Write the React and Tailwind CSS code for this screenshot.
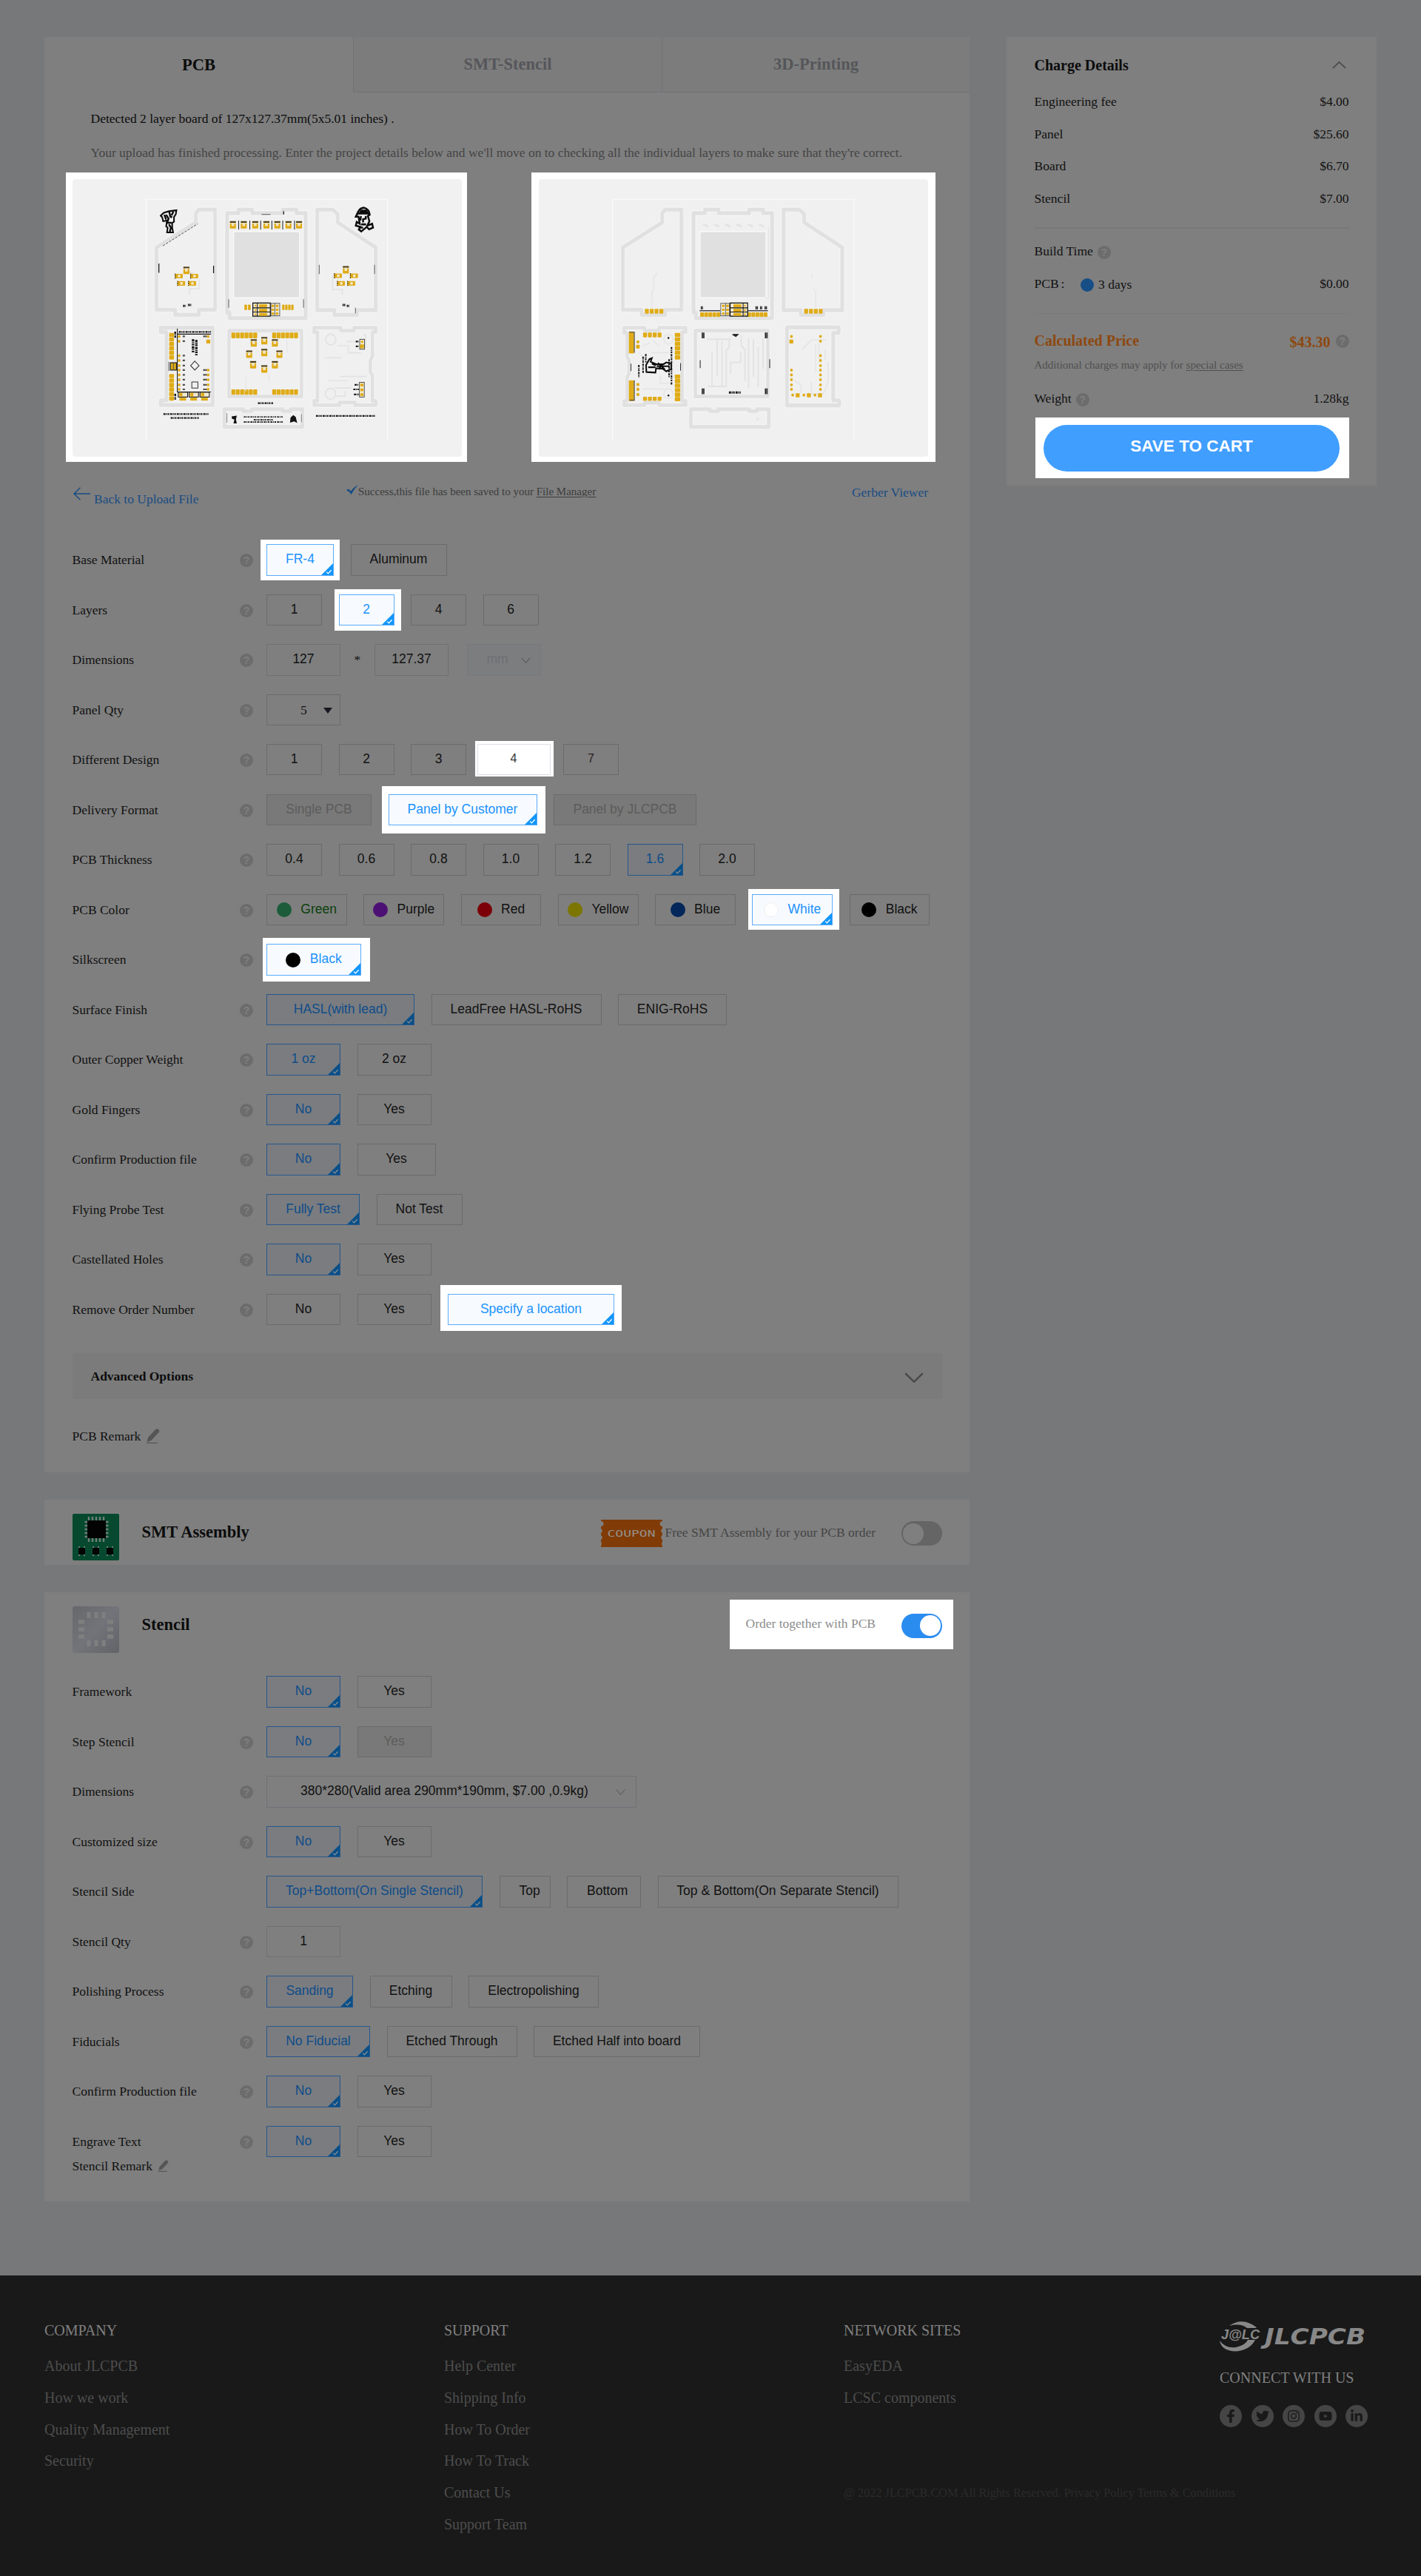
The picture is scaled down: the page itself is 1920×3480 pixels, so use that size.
import React from "react";
import { FaFacebookF, FaTwitter, FaInstagram, FaYoutube, FaLinkedinIn } from "react-icons/fa";

const serif = "font-['Liberation_Serif',serif]";
const sans = "font-['Liberation_Sans',sans-serif]";

function Help({ className = "" }) {
  return (
    <span className={`${sans} inline-flex h-[18px] w-[18px] shrink-0 items-center justify-center rounded-full bg-[#6c6c6c] text-[14px] leading-none font-bold text-[#808080] ${className}`}>
      ?
    </span>
  );
}

function Corner({ lit }) {
  return (
    <svg className="absolute right-0 bottom-0" width="16" height="16" viewBox="0 0 16 16">
      <path d="M16 0V16H0Z" fill={lit ? "#1296fa" : "#094f88"} />
      <path d="M7.2 11.6L9.4 13.9L13.6 9.2" fill="none" stroke={lit ? "#fff" : "#8a8f94"} strokeWidth="1.3" />
    </svg>
  );
}

const looks = {
  plain: "border-[#6b6b6b] text-[#111]",
  off: "border-[#6b6b6b] bg-[#797979] text-[#5c5c5c]",
  on: "border-[#28578a] bg-[#7a7c80] text-[#0f4c88]",
  lit: "border-[#5aaafa] bg-[#f7fbff] text-[#1c92fc]",
  open: "border-[#dcdfe6] bg-white text-[#333] !text-[16px]",
  faint: "border-[#6b6b6b] text-[#2a2020] !text-[16px]",
};

function Opt({ t, w, k = "plain", dot, halo, cls = "" }) {
  return (
    <div className="relative isolate shrink-0">
      {halo && <div className={`absolute -z-10 bg-white ${halo}`} />}
      <div
        className={`${sans} relative flex h-[42.5px] items-center justify-center border pb-[2px] text-[17.5px] whitespace-nowrap ${looks[k]} ${cls}`}
        style={{ width: w }}
      >
        {dot && <span className={`mt-[3px] mr-[12.5px] h-5 w-5 rounded-full ${dot}`} />}
        {t}
        {(k === "on" || k === "lit") && <Corner lit={k === "lit"} />}
      </div>
    </div>
  );
}

function Row({ label, help = true, children }) {
  return (
    <div className="flex h-[67.5px] items-center pl-[37.5px]">
      <div className="w-[226.5px] text-[17.5px] whitespace-nowrap">{label}</div>
      <div className="flex w-9 items-center">{help && <Help className="mt-[2px]" />}</div>
      <div className="flex items-center gap-[22.5px]">{children}</div>
    </div>
  );
}

function NoYes({ b = 100, off }) {
  return (
    <>
      <Opt t="No" w={100} k="on" />
      <Opt t="Yes" w={b} k={off ? "off" : "plain"} />
    </>
  );
}

function Chevron({ up, w = 22, h = 11, c = "#4a4a4a", s = 1.6, className = "" }) {
  return (
    <svg width={w} height={h} viewBox="0 0 22 11" className={className} preserveAspectRatio="none">
      <path d={up ? "M1 10L11 1L21 10" : "M1 1L11 10L21 1"} fill="none" stroke={c} strokeWidth={s} />
    </svg>
  );
}

function Pencil({ size = 20 }) {
  return (
    <svg width={size} height={size * 1.08} viewBox="0 0 20 22">
      <path d="M13.5 1.5Q15.5 -.8 18 1.2Q20.5 3.3 18.6 5.4L8 17L1.5 19.5L3 13Z" fill="#555" />
      <path d="M1 21H17" stroke="#555" strokeWidth="1.6" />
    </svg>
  );
}

/* ---------- board drawings ---------- */
const GOLD = "#dfab17";
const EDGE = "#e0e0e0";

function Led({ x, y, r = 0 }) {
  return (
    <g transform={`translate(${x} ${y}) rotate(${r})`}>
      <rect x="-10" y="-12" width="20" height="5" fill="#4c3d10" />
      <rect x="-10" y="-5" width="20" height="16" rx="2" fill={GOLD} />
      <rect x="-4.5" y="-7" width="9" height="10" fill="#f0e6c4" />
    </g>
  );
}

function Chip({ x, y }) {
  return (
    <g>
      <rect x={x - 13} y={y - 7} width="26" height="14" rx="2" fill={GOLD} />
      <rect x={x - 3} y={y - 4} width="8" height="8" fill="#f2ead0" />
      <path d={`M${x - 12} ${y - 8}v16`} stroke="#4c3d10" strokeWidth="3" strokeDasharray="4 2" />
    </g>
  );
}

function Pads({ x, y, n, dx = 0, dy = 0, w, h }) {
  return Array.from({ length: n }, (_, i) => (
    <rect key={i} x={x + dx * i} y={y + dy * i} width={w} height={h} rx="2.5" fill={GOLD} />
  ));
}

function Scribble({ d, w = 3 }) {
  return <path d={d} fill="none" stroke="#151515" strokeWidth={w} strokeDasharray="7 2 3 2 5 3" />;
}

function Outline({ d, w = 11 }) {
  return (
    <g fill="none" strokeLinejoin="round">
      <path d={d} stroke="#f8f8f8" strokeWidth={w + 6} />
      <path d={d} stroke="#e8e8e8" strokeWidth={w + 3} />
      <path d={d} stroke={EDGE} strokeWidth={w - 1} />
    </g>
  );
}

function CommonTop() {
  return (
    <>
      <rect x="386" y="552" width="799" height="751" fill="#f0f0f0" />
      <path d="M386 1302V552H1185V1302" fill="none" stroke="#fbfbfb" strokeWidth="2.5" />
      <Outline d="M560 584H614V896H560V912H482V896H420V702L550 624V596Z" />
      <Outline d="M654 595H692V584H737V595H838V584H884V595H914V922H662V905H654Z" />
      <Outline d="M952 584H1004L1020 598V624L1146 702V897H1084V912H1009V897H952Z" />
      <Outline d="M645 1206H708V1212H735V1206H838V1212H864V1206H903V1261H645Z" />
      <Outline d="M660 961H900V1166H660Z" w={10} />
      <rect x="674" y="651" width="220" height="209" fill="#fbfbfb" />
      <rect x="677" y="654" width="215" height="203" fill={EDGE} />
    </>
  );
}

function HeaderBlock({ flip }) {
  return (
    <g transform={flip ? "translate(1568 0) scale(-1 1)" : undefined}>
      <rect x="739" y="875" width="58" height="41" fill="#f2ead0" stroke="#111" strokeWidth="3" />
      {[883, 897, 910].map((y) => (
        <g key={y}>
          <rect x="760" y={y - 4} width="26" height="9" fill={GOLD} />
          <circle cx="748" cy={y} r="3" fill={GOLD} />
        </g>
      ))}
      <path d="M739 890H797M739 903H797M754 875V916" stroke="#111" strokeWidth="2.5" />
      <rect x="799" y="876" width="29" height="39" fill="none" stroke="#444" strokeWidth="2" />
      <path d="M812 876V915" stroke="#444" strokeWidth="2" />
      <Pads x={801} y={880} n={3} dy={12} w={9} h={8} />
      <Pads x={815} y={880} n={3} dy={12} w={9} h={8} />
    </g>
  );
}

function FrontBoard() {
  return (
    <svg width="526" height="375" viewBox="142 489 1289 865" preserveAspectRatio="none" className="block rounded-[4px] bg-[#f1f1f1]">
      <CommonTop />
      <path d="M441 697L557 628" stroke="#333" strokeWidth="2" strokeDasharray="8 4" />
      <g stroke="#111" strokeWidth="3" fill="none">
        <path d="M428 752V781M609 759V782M841 589V599M601 1022V1050" />
        <path d="M959 756V785M1142 756V784M907 863V890M659 863V890M1079 890V907M768 599H797" stroke="#777" />
      </g>
      {[673, 709, 747, 784, 820, 857, 892].map((x) => <Led key={x} x={x} y={632} />)}
      <path d="M692 618V646M729 618V646M765 618V646M802 618V646M838 618V646M877 618V646" stroke="#222" strokeWidth="2.5" />
      <Led x={519} y={774} /><Led x={1047} y={772} />
      <Chip x={494} y={791} /><Chip x={545} y={791} /><Chip x={502} y={814} /><Chip x={538} y={814} />
      <Chip x={1021} y={790} /><Chip x={1074} y={790} /><Chip x={1031} y={814} /><Chip x={1065} y={814} />
      <path d="M530 780H545M561 800V830H530V850M1003 790V833H1035V850" fill="none" stroke="#e3e3e3" strokeWidth="4" />
      <path d="M508 884h8M524 881h11M1036 881h9M1050 884h8" stroke="#222" strokeWidth="7" strokeDasharray="4 1" />
      <HeaderBlock />
      <Pads x={711} y={880} n={2} dx={12} w={9} h={17} />
      <Pads x={836} y={880} n={4} dx={10} w={8} h={17} />
      {/* trooper */}
      <g fill="none" stroke="#0c0c0c" strokeWidth="5">
        <path d="M434 603L444 594L461 589L486 586L484 598L478 607V622L472 625V640L475 655H455L457 640L452 636L455 618L442 620L439 608Z" />
        <path d="M462 590L466 606L472 608M452 600L460 612L455 625H470M461 630L468 640L464 653M446 600L452 615M476 590L470 602" strokeWidth="6" />
      </g>
      {/* helmet portrait */}
      <g fill="none" stroke="#0c0c0c" strokeWidth="6">
        <path d="M1085 600Q1088 580 1106 578Q1124 582 1126 600L1120 604L1125 620L1118 634L1134 628L1137 640L1124 645L1116 638L1098 652L1090 646L1095 638L1080 634L1083 622L1093 628L1089 606L1080 606L1085 596H1124" />
        <path d="M1094 587H1118M1092 592H1120M1097 604L1095 618M1113 604V612L1104 614V624M1098 630H1114M1090 640H1104" />
      </g>
      {/* controller board */}
      <Outline d="M434 952H606V1193H434V1178H453V966H434Z" />
      <path d="M489 955V1152H600M489 972H600" fill="none" stroke="#111" strokeWidth="2.5" />
      <Scribble d="M494 965H600" w={5} />
      <Pads x={462} y={968} n={6} dy={14} w={16} h={13} />
      <Pads x={462} y={1096} n={6} dy={14} w={16} h={13} />
      <Scribble d="M482 964V984M482 1158V1176" w={6} />
      <rect x="466" y="1061" width="20" height="23" fill={GOLD} stroke="#111" strokeWidth="2.5" />
      <path d="M461 1058V1087M476 1062V1083" stroke="#555" strokeWidth="2.5" />
      {[979, 994, 1039, 1054, 1070, 1084, 1099, 1114, 1130, 1144].map((y) => (
        <g key={y}>
          <circle cx="495" cy={y} r="4.5" fill={GOLD} />
          <path d={`M507 ${y}h8`} stroke="#222" strokeWidth="5" strokeDasharray="3 1" />
        </g>
      ))}
      {[979, 1084, 1099, 1114, 1130, 1144].map((y) => (
        <g key={y}>
          <circle cx="591" cy={y} r="4.5" fill={GOLD} />
          <path d={`M575 ${y}h11`} stroke="#222" strokeWidth="5" strokeDasharray="3 1" />
        </g>
      ))}
      <rect x="585" y="989" width="13" height="12" fill={GOLD} />
      <Scribble d="M541 988V1030M552 990V1038" w={8} />
      <path d="M547 1056L561 1070L547 1084L533 1070ZM537 1121H557V1140H537Z" fill="none" stroke="#333" strokeWidth="2.5" />
      {[492, 528, 564].map((x) => (
        <g key={x}>
          <rect x={x} y="1153" width="31" height="15" fill="#f2ead0" stroke="#111" strokeWidth="2.5" />
          <rect x={x + 3} y="1155" width="11" height="11" fill={GOLD} />
          <rect x={x + 4} y="1170" width="22" height="9" fill={GOLD} />
        </g>
      ))}
      {/* ring board */}
      <Pads x={668} y={967} n={6} dx={14.5} w={13} h={18} />
      <Pads x={803} y={967} n={6} dx={14.5} w={13} h={18} />
      <Pads x={668} y={1144} n={6} dx={14.5} w={13} h={17} />
      <Pads x={803} y={1144} n={6} dx={14.5} w={13} h={17} />
      {[[742, 1000], [777, 993], [812, 1000], [727, 1035], [777, 1030], [827, 1035], [740, 1068], [812, 1068], [777, 1081]].map(([x, y]) => (
        <Led key={`${x}-${y}`} x={x} y={y} />
      ))}
      <path d="M716 1105V1150M793 1095V1122M852 990V1030" stroke="#e5e5e5" strokeWidth="3" />
      <Scribble d="M756 1187H806" w={5} />
      {/* support board */}
      <Outline d="M942 952H1030V961H1074V952H1146V966H1135V1040L1128 1055V1090L1135 1100V1180H1146V1193H1078V1185H1026V1193H942V1180H953V966H942Z" w={10} />
      <g fill="none" stroke="#e2e2e2" strokeWidth="4">
        <circle cx="997" cy="989" r="17" /><circle cx="996" cy="1158" r="17" />
        <path d="M1048 995H1090M1020 1008H1055V1030H1097M978 1046H1032M1026 1104H1115M990 1117H1055M1010 1140H1065M1015 1165H1045V1150M1105 975H1112V1015" />
      </g>
      <rect x="1093" y="988" width="16" height="31" fill="#f2ead0" stroke="#333" strokeWidth="2" />
      <rect x="1094" y="1004" width="13" height="12" fill={GOLD} /><circle cx="1101" cy="996" r="4" fill={GOLD} />
      <rect x="1092" y="1122" width="16" height="46" fill="#f2ead0" stroke="#333" strokeWidth="2" />
      <Pads x={1095} y={1126} n={3} dy={15} w={10} h={9} />
      <Scribble d="M1080 995H1090M1080 1010H1090M1076 1130H1090M1072 1144H1090M1074 1160H1090" w={5} />
      <Scribble d="M443 1221H592M467 1233H560M948 1227H1144" w={5} />
      <path d="M653 1218V1248M900 1222V1246" stroke="#777" strokeWidth="2" />
      <Scribble d="M709 1230H838M742 1239H806M709 1246H840" w={4} />
      <path d="M669 1228L686 1226L683 1238L686 1250H675L678 1238L670 1236ZM862 1248L864 1232L873 1224L881 1230L886 1249L876 1244Z" fill="#111" />
    </svg>
  );
}

function BackBoard() {
  return (
    <svg width="526" height="375" viewBox="118 489 1288 865" preserveAspectRatio="none" className="block rounded-[4px] bg-[#f1f1f1]">
      <g transform="translate(-24 0)"><CommonTop /></g>
      <path d="M510 782L498 795V835L492 838V890M1021 785V795M1026 830L1034 840V890M879 640V860H865" fill="none" stroke="#e3e3e3" strokeWidth="3" />
      {[670, 706, 743, 780, 818, 854].map((x) => (
        <path key={x} d={`M${x - 8} 632h8l8 6`} fill="none" stroke="#e2e2e2" strokeWidth="6" />
      ))}
      <Pads x={469} y={893} n={4} dx={16} w={13} h={15} />
      <Pads x={996} y={893} n={4} dx={16} w={13} h={15} />
      <Pads x={652} y={904} n={5} dx={13.5} w={12.5} h={14} />
      <Pads x={808} y={904} n={5} dx={13.5} w={12.5} h={14} />
      <path d="M650 899H718M808 899H876" stroke="#444" strokeWidth="3" />
      <g transform="translate(-20 0)"><HeaderBlock flip /></g>
      <path d="M654 890h7M835 890h8M850 890h7M865 890h8" stroke="#222" strokeWidth="10" strokeDasharray="4 1" />
      {/* support board */}
      <Outline d="M400 952H468V961H516V952H604V966H592V1180H604V1193H516V1186H468V1193H400V1180H410V1105L417 1095V1055L410 1042V968H400Z" w={10} />
      <rect x="416" y="966" width="17" height="66" fill={GOLD} /><rect x="416" y="1116" width="17" height="64" fill={GOLD} />
      <path d="M417 966H434V1030M434 1116V1178H418M423 1064V1087M587 1062V1086" fill="none" stroke="#333" strokeWidth="2.5" />
      <Pads x={463} y={967} n={4} dx={16} w={13} h={15} />
      <Pads x={463} y={1167} n={4} dx={16} w={13} h={13} />
      <Pads x={568} y={968} n={6} dy={14} w={18} h={13} />
      <Pads x={568} y={1098} n={6} dy={14} w={18} h={13} />
      <Pads x={440} y={1005} n={1} w={12} h={12} />
      {[996, 1129, 1144, 1160].map((y) => <circle key={y} cx="446" cy={y} r="5" fill={GOLD} />)}
      <g fill="none" stroke="#e4e4e4" strokeWidth="3.5">
        <circle cx="547" cy="988" r="15" /><circle cx="547" cy="1157" r="15" />
        <path d="M460 1010L485 1000M495 990L516 1010M460 1143H535M490 1030H550M450 1030L470 1050M520 1100V1125H556" />
      </g>
      <circle cx="547" cy="984" r="3" fill="#111" /><circle cx="547" cy="1163" r="3" fill="#111" />
      <path d="M474 1092L473 1068L484 1050L492 1047L488 1058L508 1066H530L540 1060L556 1064V1080L540 1088L528 1080L506 1078L504 1092L474 1090M480 1075H504M492 1064L505 1070M512 1062L535 1082M514 1082L530 1064M508 1072H550" fill="none" stroke="#0c0c0c" strokeWidth="5" />
      <Scribble d="M463 1042V1095M449 1068V1106M472 1034V1060M557 1012V1130M549 1050V1108" w={5} />
      {/* trace board */}
      <g fill="none" stroke="#e2e2e2" strokeWidth="4.5">
        <path d="M674 988H755M708 990V1104M691 1025V1135M724 995V1135M748 990V1012L738 1022V1135H676M788 975V1008L800 1020V1118M786 1028V1060H753V1095M812 986V1140M828 988V1105M844 1012V1135M860 985V1080" />
      </g>
      <path d="M652 1053V1078M882 1050V1078" stroke="#444" strokeWidth="3" />
      <path d="M657 976H667M866 976H876M657 1150H667M866 1150H876" stroke="#222" strokeWidth="18" strokeDasharray="4 1" />
      <path d="M759 973H777L770 979Z" fill="#222" stroke="#222" strokeWidth="3" />
      <Scribble d="M747 1154H786" w={7} />
      {/* controller back */}
      <Outline d="M939 951H1110V968H1092V1178H1112V1194H939Z" />
      <g fill="none" stroke="#e4e4e4" strokeWidth="3.5">
        <path d="M990 1018L1020 990H1068M1034 1005V1090M1045 1000V1060M1065 1020V1050M1075 1060V1120L1060 1158M965 1117L985 1130V1155M1020 1120V1155M1000 1158H1060" />
      </g>
      {[979, 1084, 1099, 1114, 1130, 1144].map((y) => <circle key={y} cx="954" cy={y} r="4.5" fill={GOLD} />)}
      {[979, 994, 1039, 1054, 1070, 1084, 1099, 1114, 1130, 1144].map((y) => <circle key={y} cx="1050" cy={y} r="4.5" fill={GOLD} />)}
      <rect x="947" y="989" width="13" height="12" rx="2" fill={GOLD} />
      {[958, 995, 1032].map((x) => (
        <g key={x}>
          <circle cx={x} cy="1162" r="4.5" fill={GOLD} />
          <rect x={x + 10} y="1156" width="13" height="13" rx="2" fill={GOLD} />
        </g>
      ))}
      <circle cx="842" cy="1237" r="5" fill="#e6e6e6" />
    </svg>
  );
}

/* ---------- page parts ---------- */
function Tabs() {
  const idle = "flex items-center justify-center border-b border-l border-[#717277] bg-[#7c7c7c] text-[#55565a]";
  return (
    <div className="grid h-[75px] grid-cols-[417px_417px_416px] text-[22.5px] font-bold">
      <div className="flex items-center justify-center text-[#0c0c0c]">PCB</div>
      <div className={idle}>SMT-Stencil</div>
      <div className={idle}>3D-Printing</div>
    </div>
  );
}

function Box({ w, children, cls = "" }) {
  return (
    <div className={`${sans} flex h-[42.5px] shrink-0 items-center border border-[#6e7076] text-[17.5px] ${cls}`} style={{ width: w }}>
      {children}
    </div>
  );
}

function PcbCard() {
  return (
    <section className="h-[1939px] bg-[#7f7f7f]">
      <Tabs />
      <div className="mt-3 flex h-[46px] items-center pl-[62.5px] text-[17.5px] text-[#0c0c0c]">
        Detected 2 layer board of 127x127.37mm(5x5.01 inches) .
      </div>
      <div className="flex h-[46px] items-center pl-[62.5px] text-[17.5px] whitespace-nowrap text-[#454545]">
        Your upload has finished processing. Enter the project details below and we'll move on to checking all the individual layers to make sure that they're correct.
      </div>
      <div className="mt-1 flex gap-[87px] pl-[29px]">
        <div className="h-[391px] w-[542px] bg-white pt-[9px] pl-[9px]"><FrontBoard /></div>
        <div className="h-[391px] w-[546px] bg-white pt-[9px] pl-[10px]"><BackBoard /></div>
      </div>
      <div className="flex h-[98.5px] items-start pr-[56px] pl-[39px] text-[17.5px] text-[#1a4c83]">
        <div className="flex w-[369px]">
          <svg width="23" height="18" viewBox="0 0 23 18" className="mt-[34px]">
            <path d="M9.5 .8L1 9L9.5 17.2M1 9H23" fill="none" stroke="#1a4c83" strokeWidth="1.4" />
          </svg>
          <span className="mt-[37px] ml-[5px]">Back to Upload File</span>
        </div>
        <div className="mt-[29px] flex items-center text-[15px] text-[#3c3c3c]">
          <svg width="16" height="13" viewBox="0 0 16 13" className="-mt-[5px]">
            <path d="M0 7L3 5.5L6 8.5Q10 3 16 0Q10 6 6.5 13Q4 9 0 7Z" fill="#134c82" />
          </svg>
          <span className="whitespace-nowrap">Success,this file has been saved to your <u className="underline-offset-2">File Manager</u></span>
        </div>
        <div className="mt-[28px] ml-auto">Gerber Viewer</div>
      </div>

      <Row label="Base Material">
        <Opt t="FR-4" w={91} k="lit" halo="-left-[8px] -right-[8px] -top-[6px] -bottom-[6px]" />
        <Opt t="Aluminum" w={130} />
      </Row>
      <Row label="Layers">
        <Opt t="1" w={75} />
        <Opt t="2" w={75} k="lit" halo="-left-[6px] -right-[9px] -top-[7px] -bottom-[7px]" />
        <Opt t="4" w={75} />
        <Opt t="6" w={75} />
      </Row>
      <Row label="Dimensions">
        <Box w={100} cls="justify-center pb-[3px]">127</Box>
        <span className="w-[1px] text-[17.5px]"><span className="-ml-[4px]">*</span></span>
        <Box w={100} cls="justify-center pb-[3px]">127.37</Box>
        <Box w={100} cls="ml-[2px] justify-between !border-[#77787c] bg-[#7c7d7e] pr-[13px] pb-[2px] pl-[26px] text-[#6d6e72]">
          mm<Chevron w={13} h={8} c="#5f6064" s={2.2} className="mt-[4px]" />
        </Box>
      </Row>
      <Row label="Panel Qty">
        <Box w={100} cls="!font-['Liberation_Serif',serif] !border-[#6b6b6b] pl-[45px]">
          5
          <svg width="12" height="8" viewBox="0 0 12 8" className="ml-[22px] mt-[2px]"><path d="M0 0H12L6 8Z" fill="#17181f" /></svg>
        </Box>
      </Row>
      <Row label="Different Design">
        <Opt t="1" w={75} cls="-mt-px" />
        <Opt t="2" w={75} cls="-mt-px" />
        <Opt t="3" w={75} cls="-mt-px" />
        <div className="-ml-[8px] -mr-[5px]"><Opt t="4" w={99} k="open" cls="-mt-px" halo="-left-[3px] -right-[4px] -top-[4px] -bottom-[2px]" /></div>
        <Opt t="7" w={75} k="faint" cls="-mt-px" />
      </Row>
      <Row label="Delivery Format">
        <Opt t="Single PCB" w={142} k="off" />
        <Opt t="Panel by Customer" w={201} k="lit" halo="-left-[9px] -right-[11px] -top-[11px] -bottom-[11px]" />
        <Opt t="Panel by JLCPCB" w={193} k="off" />
      </Row>
      <Row label="PCB Thickness">
        {["0.4", "0.6", "0.8", "1.0", "1.2", "1.6", "2.0"].map((t) => (
          <Opt key={t} t={t} w={75} k={t === "1.6" ? "on" : "plain"} />
        ))}
      </Row>
      <Row label="PCB Color">
        <Opt t="Green" w={108.75} dot="bg-[#1c5c3b]" cls="!text-[#0a400c]" />
        <Opt t="Purple" w={108.75} dot="bg-[#4c1074]" />
        <Opt t="Red" w={108.75} dot="bg-[#7b0007]" />
        <Opt t="Yellow" w={108.75} dot="bg-[#7c7600]" />
        <Opt t="Blue" w={108.75} dot="bg-[#03275b]" />
        <Opt t="White" w={108.75} k="lit" dot="bg-white border border-[#eee]" halo="-left-[5px] -right-[9px] -top-[7px] -bottom-[6px]" />
        <Opt t="Black" w={108.75} dot="bg-black" />
      </Row>
      <Row label="Silkscreen">
        <Opt t="Black" w={128} k="lit" dot="bg-black" halo="-left-[5px] -right-[12px] -top-[8px] -bottom-[8px]" />
      </Row>
      <Row label="Surface Finish">
        <Opt t="HASL(with lead)" w={200} k="on" />
        <Opt t="LeadFree HASL-RoHS" w={230} />
        <Opt t="ENIG-RoHS" w={147} />
      </Row>
      <Row label="Outer Copper Weight">
        <Opt t="1 oz" w={100} k="on" />
        <Opt t="2 oz" w={100} />
      </Row>
      <Row label="Gold Fingers"><NoYes /></Row>
      <Row label="Confirm Production file"><NoYes b={106} /></Row>
      <Row label="Flying Probe Test">
        <Opt t="Fully Test" w={126} k="on" />
        <Opt t="Not Test" w={116} />
      </Row>
      <Row label="Castellated Holes"><NoYes /></Row>
      <Row label="Remove Order Number">
        <Opt t="No" w={100} />
        <Opt t="Yes" w={100} />
        <Opt t="Specify a location" w={225} k="lit" halo="-left-[10px] -right-[10px] -top-[12px] -bottom-[8px]" />
      </Row>

      <div className="mx-[37.5px] mt-[25.5px] flex h-[62px] items-center justify-between bg-[#7b7b7b] pr-[25px] pl-[25px] text-[17.5px] font-bold text-[#0c0c0c]">
        Advanced Options
        <Chevron w={26} h={14} s={2} className="mt-[4px]" />
      </div>
      <div className="mt-[37px] flex items-center pl-[37.5px] text-[17.5px]">
        PCB Remark<span className="ml-[7px]"><Pencil size={19} /></span>
      </div>
    </section>
  );
}

function SmtIcon() {
  return (
    <svg width="63" height="63" viewBox="0 0 63 63" className="shrink-0">
      <rect width="63" height="63" rx="2" fill="#06492f" />
      <path d="M22 4V38M27 4V38M32 4V38M37 4V38M42 4V38" stroke="#6f7f78" strokeWidth="2.4" />
      <path d="M16.5 11H48.5M16.5 16H48.5M16.5 21H48.5M16.5 26H48.5M16.5 31H48.5" stroke="#6f7f78" strokeWidth="2.4" />
      <rect x="20" y="9" width="25" height="24" fill="#030303" />
      {[8, 27, 46].map((x) => (
        <g key={x}>
          <path d={`M${x + 1} 44V57M${x + 8} 44V57`} stroke="#6f7f78" strokeWidth="2" />
          <rect x={x} y="46" width="9" height="9" fill="#030303" />
        </g>
      ))}
    </svg>
  );
}

function StencilIcon() {
  return (
    <svg width="63" height="63" viewBox="0 0 63 63" className="shrink-0">
      <defs>
        <linearGradient id="plate" x1="0" y1="0" x2="1" y2="1">
          <stop offset="0" stopColor="#67686c" /><stop offset=".5" stopColor="#737479" /><stop offset="1" stopColor="#626369" />
        </linearGradient>
      </defs>
      <rect width="63" height="63" rx="3" fill="url(#plate)" />
      <path d="M22 8V16M32 8V16M42 8V16M22 46V54M32 46V54M42 46V54" stroke="#7f7f80" strokeWidth="5" />
      <path d="M8 21H16M8 31H16M8 41H16M47 21H55M47 31H55M47 41H55" stroke="#7f7f80" strokeWidth="5.5" />
    </svg>
  );
}

function Toggle({ on }) {
  return (
    <div className={`flex h-[33px] w-[55px] shrink-0 items-center rounded-full ${on ? "justify-end bg-[#2b8cf0] pr-[2px]" : "bg-[#656565] pl-[2px]"}`}>
      <div className={`h-[28px] w-[28px] rounded-full ${on ? "bg-white" : "bg-[#7f7f7f]"}`} />
    </div>
  );
}

function Coupon() {
  return (
    <svg width="83" height="37" viewBox="0 0 83 37" className="shrink-0">
      <path d="M0 0H83V2A3.4 3.4 0 0 0 83 9V12A3.4 3.4 0 0 0 83 18V21A3.4 3.4 0 0 0 83 27V30A3.4 3.4 0 0 0 83 35V37H0V35A3.4 3.4 0 0 0 0 30V27A3.4 3.4 0 0 0 0 21V18A3.4 3.4 0 0 0 0 12V9A3.4 3.4 0 0 0 0 2Z" fill="#803b06" />
      <text x="8.5" y="22.5" textLength="65" lengthAdjust="spacingAndGlyphs" fontFamily="DejaVu Sans Mono" fontSize="12" fill="#969088">COUPON</text>
    </svg>
  );
}

function SmtCard() {
  return (
    <section className="mt-[37px] flex h-[88px] items-start bg-[#7f7f7f] pr-[37px] pl-[37.5px]">
      <div className="mt-[19px]"><SmtIcon /></div>
      <h2 className="mt-[27px] ml-[31px] text-[22.5px] leading-[34px] font-bold text-[#0c0c0c]">SMT Assembly</h2>
      <div className="mt-[27px] ml-auto flex items-center text-[17.5px] text-[#454545]">
        <Coupon />
        <span className="-mt-[3px] mr-[35px] ml-[3px]">Free SMT Assembly for your PCB order</span>
        <Toggle />
      </div>
    </section>
  );
}

function StencilCard() {
  return (
    <section className="mt-[37px] h-[823px] bg-[#7f7f7f]">
      <div className="flex h-[100.5px] items-start pr-[22px] pl-[37.5px]">
        <div className="mt-[19px]"><StencilIcon /></div>
        <h2 className="mt-[27px] ml-[31px] text-[22.5px] leading-[34px] font-bold text-[#0c0c0c]">Stencil</h2>
        <div className="mt-[10px] ml-auto flex h-[67px] w-[302px] items-center bg-white pr-[15px] pb-[1px]">
          <span className="-mt-px mr-[35px] ml-auto text-[17.5px] text-[#8c8c8c]">Order together with PCB</span>
          <span className="mt-[4px]"><Toggle on /></span>
        </div>
      </div>
      <Row label="Framework" help={false}><NoYes /></Row>
      <Row label="Step Stencil"><NoYes off /></Row>
      <Row label="Dimensions">
        <Box w={500} cls="justify-between pr-[14px] pb-[2px] pl-[45px]">
          380*280(Valid area 290mm*190mm, $7.00 ,0.9kg)
          <Chevron w={13} h={8} c="#626469" s={2} className="mt-[4px]" />
        </Box>
      </Row>
      <Row label="Customized size"><NoYes /></Row>
      <Row label="Stencil Side" help={false}>
        <Opt t="Top+Bottom(On Single Stencil)" w={292} k="on" />
        <Opt t="Top" w={69} cls="!justify-start pl-[26px]" />
        <Opt t="Bottom" w={100} cls="!justify-start pl-[26px]" />
        <Opt t="Top & Bottom(On Separate Stencil)" w={325} />
      </Row>
      <Row label="Stencil Qty"><Box w={100} cls="justify-center pb-[2px]">1</Box></Row>
      <Row label="Polishing Process">
        <Opt t="Sanding" w={117} k="on" />
        <Opt t="Etching" w={111} />
        <Opt t="Electropolishing" w={176} />
      </Row>
      <Row label="Fiducials">
        <Opt t="No Fiducial" w={140} k="on" />
        <Opt t="Etched Through" w={176} />
        <Opt t="Etched Half into board" w={225} />
      </Row>
      <Row label="Confirm Production file"><NoYes /></Row>
      <Row label="Engrave Text"><NoYes /></Row>
      <div className="-mt-[13.5px] flex items-center pl-[37.5px] text-[17.5px]">
        Stencil Remark<span className="ml-[7px]"><Pencil size={15} /></span>
      </div>
    </section>
  );
}

function Line({ a, b }) {
  return (
    <div className="flex h-[43.75px] items-center justify-between text-[17.5px]">
      <span>{a}</span><span>{b}</span>
    </div>
  );
}

function Charges() {
  return (
    <aside className="h-[606px] w-[500px] bg-[#7f7f7f] px-[37.5px] text-[17.5px]">
      <div className="flex h-[76px] items-center justify-between pr-[4px] text-[20px] font-bold text-[#0c0c0c]">
        Charge Details<Chevron up w={19} h={10} s={2} />
      </div>
      <div className="-mt-[11px]">
        <Line a="Engineering fee" b="$4.00" />
        <Line a="Panel" b="$25.60" />
        <Line a="Board" b="$6.70" />
        <Line a="Stencil" b="$7.00" />
      </div>
      <div className="mt-[17px] h-[2px] bg-[#77787b]" />
      <div className="mt-[10px] flex h-[40px] items-center">Build Time<Help className="mt-[3px] ml-[6px]" /></div>
      <div className="mt-[4px] flex h-[40px] items-center">
        <span className="w-[62.5px]">PCB<span className="ml-[3px]">:</span></span>
        <span className="mt-[3px] h-[18px] w-[18px] rounded-full bg-[#174e86]" />
        <span className="mt-[3px] ml-[6px]">3 days</span>
        <span className="ml-auto">$0.00</span>
      </div>
      <div className="mt-[20px] h-px bg-[#78797b]" />
      <div className="mt-[16px] flex h-[40px] items-center text-[20px] font-bold text-[#8d480f]">
        Calculated Price<span className="mt-[3px] ml-auto">$43.30</span><Help className="mt-[2px] ml-[7px]" />
      </div>
      <div className="mt-[3px] flex h-[20px] items-center text-[15px] text-[#505050]">
        <span>Additional charges may apply for <u className="underline-offset-2">special cases</u></span>
      </div>
      <div className="mt-[15px] flex h-[40px] items-center">
        Weight<Help className="mt-[3px] ml-[6px]" /><span className="ml-auto">1.28kg</span>
      </div>
      <div className="mt-[6px] ml-[1.5px] h-[82px] w-[424px] bg-white pt-[10px] pl-[11px]">
        <button className={`${sans} flex h-[62.5px] w-[400px] items-center justify-center rounded-full bg-[#409eff] pb-[4px] text-[22.5px] font-bold text-white`}>
          SAVE TO CART
        </button>
      </div>
    </aside>
  );
}

function Col({ title, items }) {
  return (
    <div>
      <h3 className="h-[48px] text-[20px] leading-[30px] text-[#808080]">{title}</h3>
      {items.map((t) => (
        <div key={t} className="h-[42.8px] text-[20px] leading-[30px] text-[#4d4d4d]">{t}</div>
      ))}
    </div>
  );
}

function Footer() {
  const social = [FaFacebookF, FaTwitter, FaInstagram, FaYoutube, FaLinkedinIn];
  return (
    <footer className="mt-[100px] grid h-[406px] grid-cols-[540px_540px_508px_272px] bg-[#191919] pt-[59px] pl-[60px]">
      <Col title="COMPANY" items={["About JLCPCB", "How we work", "Quality Management", "Security"]} />
      <Col title="SUPPORT" items={["Help Center", "Shipping Info", "How To Order", "How To Track", "Contact Us", "Support Team"]} />
      <div>
        <Col title="NETWORK SITES" items={["EasyEDA", "LCSC components"]} />
        <div className="mt-[86px] text-[16.25px] leading-[30px] whitespace-nowrap text-[#2b2b2b]">
          @ 2022 JLCPCB.COM All Rights Reserved. Privacy Policy Terms &amp; Conditions
        </div>
      </div>
      <div>
        <svg width="200" height="42" viewBox="0 0 200 42" className="mt-[2px] block">
          <g fill="#888">
            <path d="M13 7Q24 -1 36 2Q46 5 50 10H37Q28 3 13 7Z" />
            <path d="M0 27Q8 38 22 36Q35 33 38 26H48Q40 41 20 41.5Q2 40 0 27Z" />
            <text x="2" y="24.5" textLength="52" lengthAdjust="spacingAndGlyphs" fontFamily="Liberation Sans" fontStyle="italic" fontWeight="700" fontSize="19">J@LC</text>
            <text x="61" y="31.5" textLength="136" lengthAdjust="spacingAndGlyphs" fontFamily="DejaVu Sans" fontStyle="italic" fontWeight="700" fontSize="30.5">JLCPCB</text>
          </g>
        </svg>
        <h3 className="mt-[20px] text-[20px] leading-[30px] text-[#808080]">CONNECT WITH US</h3>
        <div className="mt-[22px] flex gap-[12.5px]">
          {social.map((Icon, i) => (
            <span key={i} className="flex h-[30px] w-[30px] items-center justify-center rounded-full bg-[#454545] text-[18px] text-[#191919]">
              <Icon />
            </span>
          ))}
        </div>
      </div>
    </footer>
  );
}

export default function App() {
  return (
    <div className={`${serif} h-[3480px] w-[1920px] overflow-hidden bg-[#77787a] text-[#111]`}>
      <div className="flex items-start gap-[50px] pt-[50px] pl-[60px]">
        <main className="w-[1250px]">
          <PcbCard />
          <SmtCard />
          <StencilCard />
        </main>
        <Charges />
      </div>
      <Footer />
    </div>
  );
}
